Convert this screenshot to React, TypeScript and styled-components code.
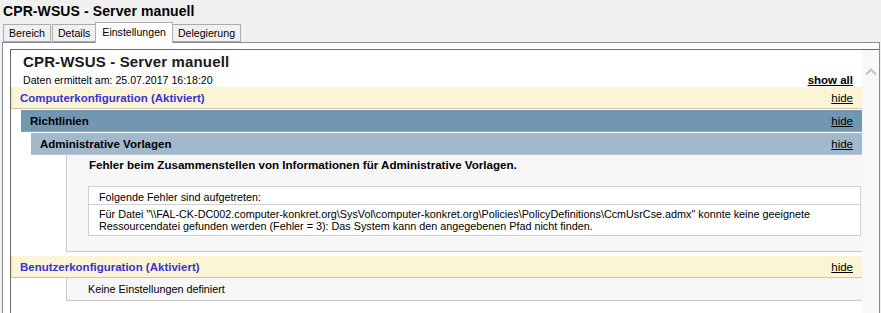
import React from "react";
import styled, { createGlobalStyle } from "styled-components";

const Global = createGlobalStyle`
  html, body { margin: 0; padding: 0; background: #f0f0f0; }
  body { font-family: "Liberation Sans", Arial, sans-serif; color: #000; }
  * { box-sizing: border-box; }
`;

const Window = styled.div`
  width: 881px;
  height: 313px;
  overflow: hidden;
  display: flex;
  flex-direction: column;
  background: #f0f0f0;
`;

const WindowTitle = styled.div`
  height: 22px;
  padding: 3px 0 0 3px;
  font-size: 14px;
  font-weight: bold;
  letter-spacing: 0.1px;
  line-height: 16px;
`;

const TabStrip = styled.div`
  height: 20px;
  display: flex;
  align-items: flex-end;
  padding-left: 3px;
  position: relative;
  z-index: 2;
`;

const Tab = styled.div<{ $active?: boolean }>`
  height: ${(p) => (p.$active ? "21px" : "18px")};
  margin-bottom: ${(p) => (p.$active ? "-1px" : "0")};
  margin-left: ${(p) => (p.$active ? "-2px" : "0")};
  margin-right: ${(p) => (p.$active ? "-1px" : "1px")};
  padding: ${(p) => (p.$active ? "2px 6px 0" : "1px 5px 0")};
  border: 1px solid ${(p) => (p.$active ? "#aeaeb5" : "#acacac")};
  border-bottom: ${(p) => (p.$active ? "none" : "1px solid #acacac")};
  background: ${(p) => (p.$active ? "#fff" : "#f0f0f0")};
  font-size: 10.6px;
  line-height: 14px;
  position: relative;
  z-index: ${(p) => (p.$active ? 2 : 1)};
`;

const TabPage = styled.div`
  flex: 1;
  min-height: 0;
  margin: 0 1px 0 2px;
  border: 1px solid #898c95;
  border-bottom: none;
  background: #fff;
  padding: 6px 0 0 7px;
  display: flex;
`;

const Browser = styled.div`
  flex: 1;
  border-top: 1px solid #6b6b6b;
  border-left: 1px solid #6b6b6b;
  display: flex;
  min-width: 0;
`;

const Report = styled.div`
  flex: 1;
  min-width: 0;
  padding-top: 3px;
  font-size: 10.8px;
`;

const ScrollBar = styled.div`
  width: 17px;
  background: #f8f8f8;
  display: flex;
  justify-content: center;
  padding-top: 17px;
`;

const ReportTitle = styled.div`
  padding-left: 12px;
  font-size: 15px;
  font-weight: bold;
  line-height: 18px;
  letter-spacing: 0.15px;
  color: #1a1a1a;
`;

const InfoRow = styled.div`
  display: flex;
  justify-content: space-between;
  align-items: flex-end;
  padding: 1px 9px 0 12px;
  height: 16px;
  line-height: 14px;
`;

const DateText = styled.span`
  font-size: 10.6px;
`;

const ShowAll = styled.a`
  font-weight: bold;
  color: #000;
  text-decoration: underline;
  font-size: 11.5px;
`;

type Level = "config" | "category" | "sub";

const headerBg: Record<Level, string> = {
  config: "#fcf5d5",
  category: "#7297b3",
  sub: "#a2b9cb",
};
const headerBorder: Record<Level, string> = {
  config: "#c9c6b8",
  category: "#93a9ba",
  sub: "#b9c5cf",
};
const headerIndent: Record<Level, number> = { config: 0, category: 10, sub: 20 };

const Header = styled.div<{ $level: Level }>`
  margin-left: ${(p) => headerIndent[p.$level]}px;
  margin-top: ${(p) => (p.$level === "config" ? 0 : 1)}px;
  height: 22px;
  background: ${(p) => headerBg[p.$level]};
  border-bottom: 1px solid ${(p) => headerBorder[p.$level]};
  border-left: 1px solid ${(p) => (p.$level === "config" ? "#e3dfcc" : headerBg[p.$level])};
  display: flex;
  align-items: center;
  justify-content: space-between;
  padding: 0 9px 0 8px;
  font-size: 11.5px;
`;

const HeaderTitle = styled.span<{ $level: Level }>`
  font-weight: bold;
  color: ${(p) => (p.$level === "config" ? "#3b31d2" : "#000")};
`;

const Hide = styled.a`
  color: #000;
  text-decoration: underline;
  font-size: 11.5px;
`;

const ContentBox = styled.div<{ $gapBelow?: boolean }>`
  margin-left: 55px;
  background: #f7f7f7;
  border-left: 1px solid #c8c8c8;
  border-bottom: 1px solid #c8c8c8;
  padding: ${(p) => (p.$gapBelow ? "3px 1px 15px 21px" : "4px 1px 4px 21px")};
  margin-bottom: ${(p) => (p.$gapBelow ? "4px" : "0")};
`;

const ErrorTitle = styled.div`
  font-weight: bold;
  font-size: 11.6px;
  line-height: 14px;
  padding-left: 1px;
  margin-bottom: 14px;
`;

const Table = styled.div`
  background: #fff;
  border: 1px solid #d0d0d0;
`;

const TableRow = styled.div<{ $first?: boolean }>`
  padding: ${(p) => (p.$first ? "4px 10px 1px" : "3px 10px 3px")};
  border-top: ${(p) => (p.$first ? "none" : "1px solid #d0d0d0")};
  line-height: 12px;
  min-height: ${(p) => (p.$first ? "17px" : "31px")};
`;

const PlainText = styled.div`
  line-height: 14px;
`;

const Chevron = () => (
  <svg width="12" height="9" viewBox="0 0 12 9">
    <path d="M1 7.5 L6 2.5 L11 7.5" fill="none" stroke="#c3c3c3" strokeWidth="2" />
  </svg>
);

export default function App() {
  return (
    <Window>
      <Global />
      <WindowTitle>CPR-WSUS - Server manuell</WindowTitle>
      <TabStrip>
        <Tab>Bereich</Tab>
        <Tab>Details</Tab>
        <Tab $active>Einstellungen</Tab>
        <Tab>Delegierung</Tab>
      </TabStrip>
      <TabPage>
        <Browser>
          <Report>
            <ReportTitle>CPR-WSUS - Server manuell</ReportTitle>
            <InfoRow>
              <DateText>Daten ermittelt am: 25.07.2017 16:18:20</DateText>
              <ShowAll>show all</ShowAll>
            </InfoRow>
            <Header $level="config">
              <HeaderTitle $level="config">Computerkonfiguration (Aktiviert)</HeaderTitle>
              <Hide>hide</Hide>
            </Header>
            <Header $level="category">
              <HeaderTitle $level="category">Richtlinien</HeaderTitle>
              <Hide>hide</Hide>
            </Header>
            <Header $level="sub">
              <HeaderTitle $level="sub">Administrative Vorlagen</HeaderTitle>
              <Hide>hide</Hide>
            </Header>
            <ContentBox $gapBelow>
              <ErrorTitle>Fehler beim Zusammenstellen von Informationen für Administrative Vorlagen.</ErrorTitle>
              <Table>
                <TableRow $first>Folgende Fehler sind aufgetreten:</TableRow>
                <TableRow>
                  Für Datei "\\FAL-CK-DC002.computer-konkret.org\SysVol\computer-konkret.org\Policies\PolicyDefinitions\CcmUsrCse.admx" konnte keine geeignete
                  <br />
                  Ressourcendatei gefunden werden (Fehler = 3): Das System kann den angegebenen Pfad nicht finden.
                </TableRow>
              </Table>
            </ContentBox>
            <Header $level="config">
              <HeaderTitle $level="config">Benutzerkonfiguration (Aktiviert)</HeaderTitle>
              <Hide>hide</Hide>
            </Header>
            <ContentBox>
              <PlainText>Keine Einstellungen definiert</PlainText>
            </ContentBox>
          </Report>
          <ScrollBar>
            <Chevron />
          </ScrollBar>
        </Browser>
      </TabPage>
    </Window>
  );
}
